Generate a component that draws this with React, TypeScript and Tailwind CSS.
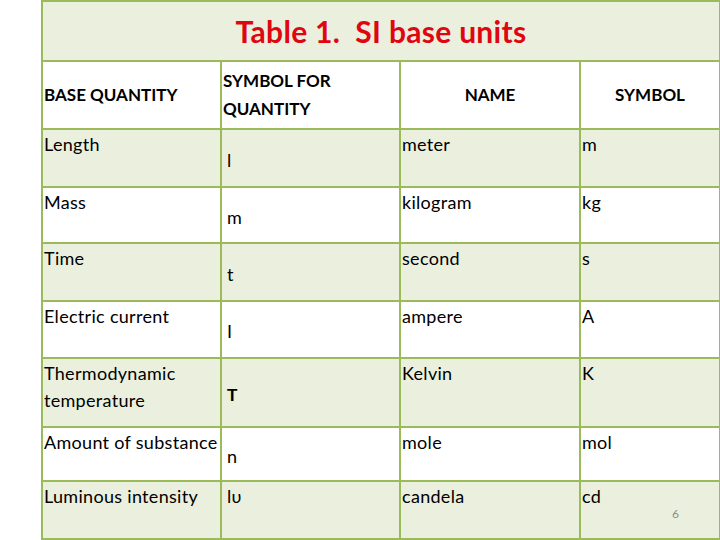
const rows = [
  { q: 'Length', s: 'l', n: 'meter', u: 'm', h: 'h-[58px]', green: true },
  { q: 'Mass', s: 'm', n: 'kilogram', u: 'kg', h: 'h-[56px]', green: false },
  { q: 'Time', s: 't', n: 'second', u: 's', h: 'h-[58px]', green: true },
  { q: 'Electric current', s: 'I', n: 'ampere', u: 'A', h: 'h-[57px]', green: false },
  { q: 'Thermodynamic temperature', s: 'T', n: 'Kelvin', u: 'K', h: 'h-[69px]', green: true },
  { q: 'Amount of substance', s: 'n', n: 'mole', u: 'mol', h: 'h-[54px]', green: false },
  { q: 'Luminous intensity', s: 'lυ', n: 'candela', u: 'cd', h: 'h-[58px]', green: true },
]

const cell = 'border-2 border-[#9bbb59] p-0'

export default function App() {
  return (
    <div className="w-[720px] h-[540px] overflow-hidden bg-white font-['Lato',sans-serif] text-black">
      <table className="ml-[41px] w-[678px] table-fixed border-collapse">
        <colgroup>
          <col className="w-[179px]" />
          <col className="w-[179px]" />
          <col className="w-[180px]" />
          <col className="w-[140px]" />
        </colgroup>
        <tbody>
          {/* title */}
          <tr className="h-[60px] bg-[#ebf0de]">
            <td colSpan={4} className={`${cell} text-center align-middle`}>
              <span className="text-[30px] font-bold text-[#e0060f] whitespace-pre tracking-[0.3px]">
                {'Table 1.  SI base units'}
              </span>
            </td>
          </tr>

          {/* header */}
          <tr className="h-[68px] bg-white text-[17px] font-bold leading-[28px]">
            <td className={`${cell} align-middle pl-[1px]`}>BASE QUANTITY</td>
            <td className={`${cell} align-middle pl-[1px]`}>
              SYMBOL FOR
              <br />
              QUANTITY
            </td>
            <td className={`${cell} align-middle text-center`}>NAME</td>
            <td className={`${cell} align-middle text-center`}>SYMBOL</td>
          </tr>

          {rows.map((r, i) => (
            <tr
              key={r.q}
              className={`${r.h} ${r.green ? 'bg-[#ebf0de]' : 'bg-white'} text-[18px] leading-[27px] tracking-[0.3px]`}
            >
              <td className={`${cell} align-top pt-[1px] pl-[1px]`}>
                {r.q === 'Thermodynamic temperature' ? (
                  <>
                    Thermodynamic
                    <br />
                    temperature
                  </>
                ) : (
                  r.q
                )}
              </td>
              <td
                className={`${cell} pl-[5px] ${i === rows.length - 1 ? 'align-top pt-[1px]' : 'align-middle pt-[4px]'}`}
              >
                {r.s === 'T' ? (
                  <span className="font-['Liberation_Sans',sans-serif] font-bold text-[17px]">T</span>
                ) : (
                  r.s
                )}
              </td>
              <td className={`${cell} align-top pt-[1px] pl-[1px]`}>{r.n}</td>
              <td className={`${cell} relative align-top pt-[1px] pl-[1px]`}>
                {r.u}
                {i === rows.length - 1 && (
                  <span className="absolute left-[91px] top-[18px] text-[12px] text-[#8c8c8c]">6</span>
                )}
              </td>
            </tr>
          ))}
        </tbody>
      </table>
    </div>
  )
}
